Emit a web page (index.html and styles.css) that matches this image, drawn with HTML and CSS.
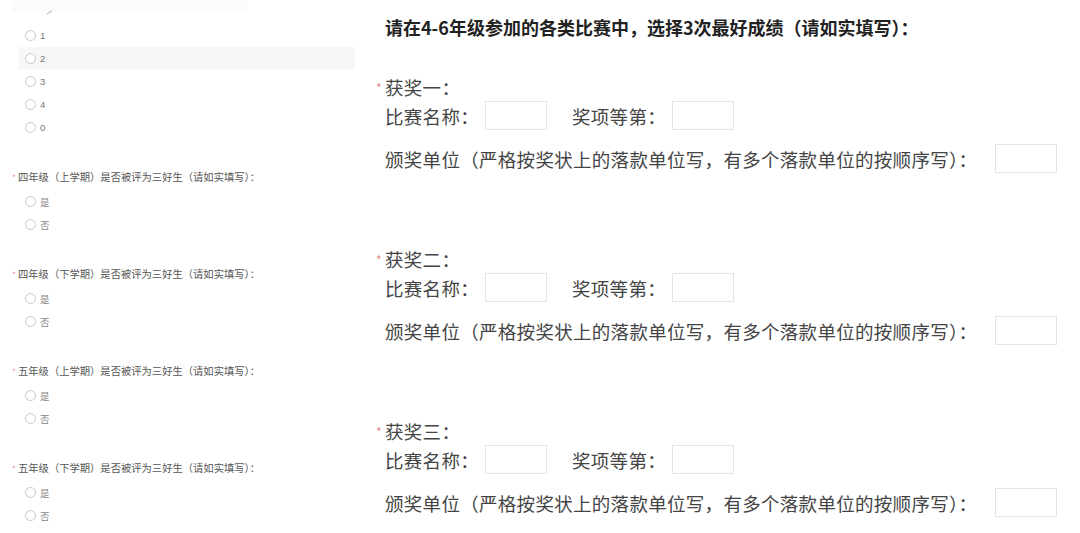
FILE: index.html
```html
<!DOCTYPE html>
<html lang="zh-CN">
<head>
<meta charset="utf-8">
<link rel="stylesheet" href="styles.css">
</head>
<body>
<div class="page">
  <div class="left">
    <div class="strip"><svg class="tick" width="8" height="6" viewBox="0 0 8 6"><path d="M1 5 L6 2" stroke="#bbb" stroke-width="1.2" fill="none"/></svg></div>
    <div class="opts first">
      <div class="opt"><span class="rd"></span><span class="num">1</span></div>
      <div class="opt hl"><span class="rd"></span><span class="num">2</span></div>
      <div class="opt"><span class="rd"></span><span class="num">3</span></div>
      <div class="opt"><span class="rd"></span><span class="num">4</span></div>
      <div class="opt"><span class="rd"></span><span class="num">0</span></div>
    </div>
    <div class="q">
      <div class="qt"><span class="st">*</span>四年级（上学期）是否被评为三好生（请如实填写）：</div>
      <div class="opt"><span class="rd"></span><span class="lb">是</span></div>
      <div class="opt"><span class="rd"></span><span class="lb">否</span></div>
    </div>
    <div class="q">
      <div class="qt"><span class="st">*</span>四年级（下学期）是否被评为三好生（请如实填写）：</div>
      <div class="opt"><span class="rd"></span><span class="lb">是</span></div>
      <div class="opt"><span class="rd"></span><span class="lb">否</span></div>
    </div>
    <div class="q">
      <div class="qt"><span class="st">*</span>五年级（上学期）是否被评为三好生（请如实填写）：</div>
      <div class="opt"><span class="rd"></span><span class="lb">是</span></div>
      <div class="opt"><span class="rd"></span><span class="lb">否</span></div>
    </div>
    <div class="q">
      <div class="qt"><span class="st">*</span>五年级（下学期）是否被评为三好生（请如实填写）：</div>
      <div class="opt"><span class="rd"></span><span class="lb">是</span></div>
      <div class="opt"><span class="rd"></span><span class="lb">否</span></div>
    </div>
  </div>
  <div class="right">
    <div class="title">请在4-6年级参加的各类比赛中，选择3次最好成绩（请如实填写）：</div>
    <div class="award">
      <div class="al"><span class="ast">*</span>获奖一：</div>
      <div class="row"><span>比赛名称：</span><span class="box"></span><span class="gap">奖项等第：</span><span class="box"></span></div>
      <div class="row r2"><span>颁奖单位（严格按奖状上的落款单位写，有多个落款单位的按顺序写）：</span><span class="box wide"></span></div>
    </div>
    <div class="award">
      <div class="al"><span class="ast">*</span>获奖二：</div>
      <div class="row"><span>比赛名称：</span><span class="box"></span><span class="gap">奖项等第：</span><span class="box"></span></div>
      <div class="row r2"><span>颁奖单位（严格按奖状上的落款单位写，有多个落款单位的按顺序写）：</span><span class="box wide"></span></div>
    </div>
    <div class="award">
      <div class="al"><span class="ast">*</span>获奖三：</div>
      <div class="row"><span>比赛名称：</span><span class="box"></span><span class="gap">奖项等第：</span><span class="box"></span></div>
      <div class="row r2"><span>颁奖单位（严格按奖状上的落款单位写，有多个落款单位的按顺序写）：</span><span class="box wide"></span></div>
    </div>
  </div>
</div>
</body>
</html>
```
FILE: styles.css
```css
html, body {
  margin: 0;
  padding: 0;
  background: #fff;
}
body {
  font-family: "Noto Sans CJK SC", "Noto Sans", sans-serif;
  width: 1080px;
  height: 533px;
  overflow: hidden;
}
.page {
  display: flex;
}
.left {
  width: 360px;
  flex: none;
}
.strip {
  margin-left: 12px;
  width: 236px;
  height: 12px;
  background: #fbfbfb;
  position: relative;
}
.tick {
  position: absolute;
  left: 34px;
  top: 9px;
}
.opts.first {
  margin-top: 12px;
}
.opt {
  height: 23px;
  display: flex;
  align-items: center;
  margin-left: 18px;
  margin-right: 5px;
  padding-left: 7px;
}
.opt.hl {
  background: #f7f7f7;
}
.rd {
  width: 9px;
  height: 9px;
  border: 1px solid #c9c9c9;
  border-radius: 50%;
  background: #fff;
  flex: none;
}
.num {
  font-size: 9.5px;
  color: #777;
  margin-left: 4px;
  font-family: "Liberation Sans", sans-serif;
}
.lb {
  font-size: 9.5px;
  color: #888;
  margin-left: 4px;
}
.q {
  margin-top: 25px;
}
.qt {
  height: 26px;
  line-height: 26px;
  font-size: 10.3px;
  color: #555;
  padding-left: 12px;
  white-space: nowrap;
}
.qt .st {
  color: #f08a8a;
  font-size: 8px;
  display: inline-block;
  width: 6px;
}
.right {
  flex: 1;
  padding-left: 16px;
  color: #444;
  font-size: 18.5px;
  letter-spacing: 0.3px;
}
.title {
  margin-top: 12px;
  height: 30px;
  line-height: 30px;
  padding-left: 9px;
  font-weight: bold;
  font-size: 18px;
  letter-spacing: 0;
  color: #222;
  white-space: nowrap;
}
.title + .award {
  margin-top: 31px;
}
.award {
  margin-top: 72px;
}
.al {
  height: 28px;
  line-height: 28px;
  white-space: nowrap;
}
.ast {
  display: inline-block;
  width: 9px;
  color: #e28a8a;
  font-size: 12px;
  vertical-align: top;
  line-height: 30px;
}
.row {
  display: flex;
  align-items: center;
  padding-left: 9px;
  height: 29px;
  white-space: nowrap;
}
.row.r2 {
  margin-top: 14px;
}
.box {
  width: 60px;
  height: 27px;
  border: 1px solid #e3e3e3;
  background: #fff;
  margin-left: 6px;
  flex: none;
}
.gap {
  margin-left: 25px;
}
.box.wide {
  margin-left: 18px;
}
```
